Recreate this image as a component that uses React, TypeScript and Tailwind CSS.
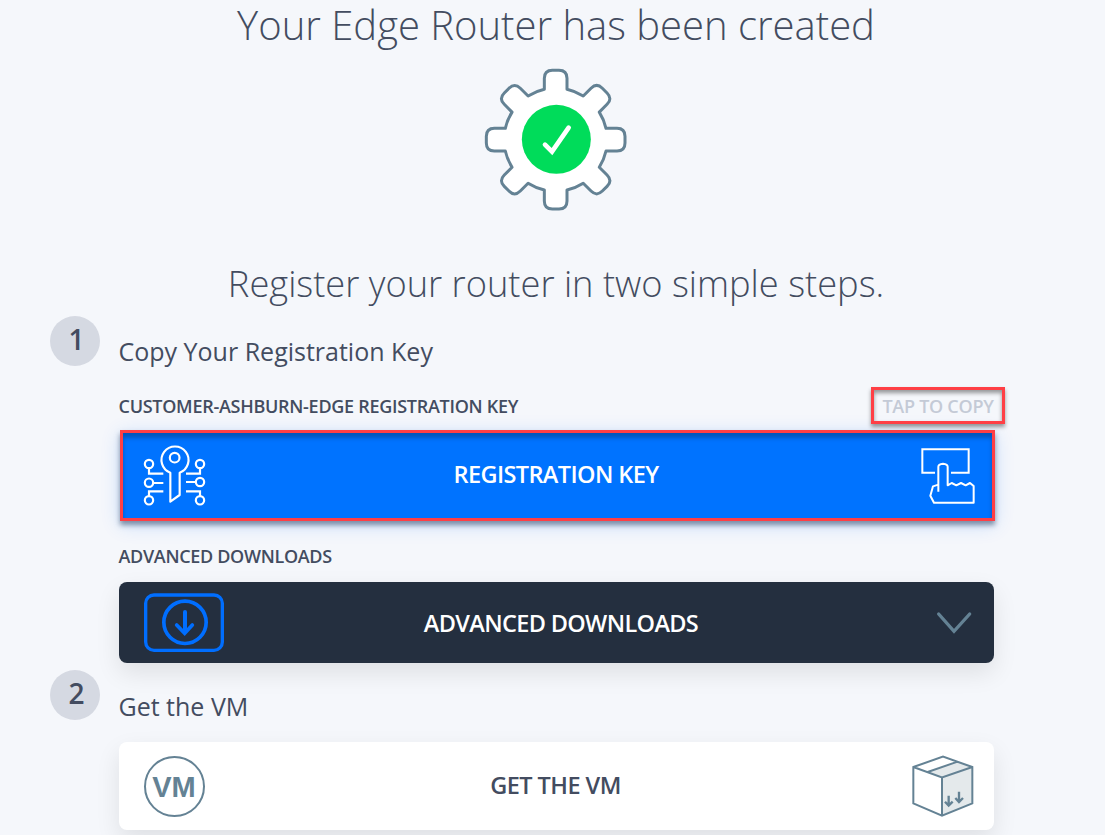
const TEETH = 8;

function gearPath(): string {
  let d = "";
  for (let i = 0; i < TEETH; i++) {
    const a = (i * 2 * Math.PI) / TEETH;
    const p = (x: number, y: number) =>
      `${(x * Math.cos(a) - y * Math.sin(a)).toFixed(2)} ${(x * Math.sin(a) + y * Math.cos(a)).toFixed(2)}`;
    d += i === 0 ? `M${p(-34, -151)}` : `A155 155 0 0 1 ${p(-34, -151)}`;
    d += `L${p(-34, -184)}Q${p(-34, -208)} ${p(-10, -208)}L${p(10, -208)}Q${p(34, -208)} ${p(34, -184)}L${p(34, -151)}`;
  }
  return d + "A155 155 0 0 1 -34 -151Z";
}

function Gear() {
  return (
    <svg className="block h-40 w-40" viewBox="-242 -239 480 480" fill="none">
      <path d={gearPath()} fill="#fff" stroke="#648294" strokeWidth="9" strokeLinejoin="round" />
      <circle cx="2" cy="-1" r="103.5" fill="#00dc5a" />
      <path d="M-32 15L-11 36L39 -36" stroke="#fff" strokeWidth="14" strokeLinecap="round" strokeLinejoin="miter" />
    </svg>
  );
}

function KeyIcon() {
  return (
    <svg className="h-[62px] w-16" viewBox="96 60 192 186" fill="none" stroke="#fff" strokeWidth="6.5">
      <path d="M181 143A40.5 40.5 0 1 1 209 143V210L181 230Z" strokeLinejoin="round" />
      <circle cx="194" cy="98" r="14.5" />
      <circle cx="117" cy="117" r="12.5" />
      <circle cx="117" cy="173" r="12.5" />
      <circle cx="117" cy="226" r="12.5" />
      <circle cx="270" cy="117" r="12.5" />
      <circle cx="270" cy="171" r="12.5" />
      <circle cx="270" cy="226" r="12.5" />
      <path d="M117 129V146H160M129 174H160M117 215V199H160M270 129V146H228M258 171H228M270 215V199H228" />
    </svg>
  );
}

function TapIcon() {
  return (
    <svg className="h-[58px] w-14" viewBox="180 201 168 174" fill="none" stroke="#fff" strokeWidth="6">
      <path d="M225 278H187V208H326V278H273" />
      <path d="M235 335V260Q235 252 249 251Q263 252 263 260V316L275 309L289 316L303 309L317 316L330 309L341 318V368H222L211 347L219 319L235 314" strokeLinejoin="round" />
    </svg>
  );
}

function DownloadIcon() {
  return (
    <svg className="h-[60px] w-[82px]" viewBox="99 53 246 180" fill="none" stroke="#006eff">
      <rect x="107" y="59" width="230" height="166" rx="25" strokeWidth="10" />
      <circle cx="225" cy="141" r="63.5" strokeWidth="11" />
      <path d="M225 110V168" strokeWidth="12" strokeLinecap="round" />
      <path d="M200 149L224 174L247 149" strokeWidth="11" strokeLinecap="round" />
    </svg>
  );
}

function BoxIcon() {
  return (
    <svg className="h-[62px] w-16" viewBox="62 61 192 186" fill="none" stroke="#648294" strokeWidth="6">
      <path d="M112 112L202 81L246 97V206L155 243V128Z" fill="#e4e9eb" stroke="none" />
      <path d="M69 97L158 66L246 97V206L155 243L69 206ZM69 97L155 128L246 97M155 128V243M112 112L202 81" />
      <path d="M175 183V211M164 201L175 213L187 201M206 171V200M195 190L206 202L218 190" strokeWidth="7" />
    </svg>
  );
}

function StepNumber({ n }: { n: number }) {
  return (
    <div className="flex h-[50px] w-[50px] shrink-0 justify-center rounded-full bg-[#d5d9e2] pl-[3px] text-[28px] leading-[46px] font-semibold">
      {n}
    </div>
  );
}

export default function App() {
  return (
    <main className="h-[835px] w-[1105px] overflow-hidden bg-[#f5f7fb] font-['Open_Sans',sans-serif] text-[#434c60]">
      <h1 className="h-[60px] pl-[7px] text-center text-[40px] leading-[50px] font-light whitespace-nowrap">
        Your Edge Router has been created
      </h1>
      <div className="flex h-40 pl-[475px]"><Gear /></div>
      <h2 className="h-24 pt-[37px] pl-[7px] text-center text-[36.25px] leading-[52px] font-light whitespace-nowrap">
        Register your router in two simple steps.
      </h2>
      <section className="flex h-[354px] gap-[19px] pl-[50px]">
        <StepNumber n={1} />
        <div className="w-[886px]">
          <h3 className="-ml-[0.5px] h-[71px] pt-[17px] text-[25px] leading-9">Copy Your Registration Key</h3>
          <div className="flex h-[37px] items-center justify-between">
            <span className="-ml-[0.5px] pt-0.5 text-[18px] font-semibold tracking-[-0.28px]">CUSTOMER-ASHBURN-EDGE REGISTRATION KEY</span>
            <div className="flex h-[37px] w-[134px] items-center justify-center border-3 border-[#ff3f45] pt-px text-[18px] font-semibold tracking-[-0.27px] text-[#c4cad6] shadow-[0_3px_4px_#0006,inset_0_3px_4px_#0006]">
              TAP TO COPY
            </div>
          </div>
          <button className="mt-[6px] ml-px flex h-[91px] w-[875px] items-center border-3 border-[#ff3f45] bg-[#0073ff] pr-[16px] pl-[19px] text-white shadow-[0_4px_5px_#3c536f99,0_4px_18px_#006eff30,inset_0_5px_4px_#0056bd]">
            <KeyIcon />
            <span className="flex-1 pr-[14px] pb-px text-center text-[23.5px] font-semibold tracking-[-0.6px]">REGISTRATION KEY</span>
            <TapIcon />
          </button>
          <div className="-ml-[0.5px] h-[61px] pt-[21px] text-[18px] leading-7 font-semibold tracking-[-0.32px]">ADVANCED DOWNLOADS</div>
          <button className="flex h-[81px] w-[875px] items-center rounded-lg bg-[#242f3f] pr-[20px] pl-6 text-white shadow-[0_10px_25px_#00000018]">
            <DownloadIcon />
            <span className="flex-1 pt-[3px] pr-[37px] text-center text-[23.5px] font-semibold tracking-[-0.65px]">ADVANCED DOWNLOADS</span>
            <svg className="h-7 w-10" viewBox="102 101 120 84" fill="none">
              <path d="M116 116L162 168L209 116" stroke="#648294" strokeWidth="10" strokeLinecap="round" />
            </svg>
          </button>
        </div>
      </section>
      <section className="flex gap-[19px] pl-[50px]">
        <StepNumber n={2} />
        <div className="w-[875px]">
          <h3 className="-ml-[0.5px] h-[72px] pt-[18px] text-[25px] leading-9">Get the VM</h3>
          <button className="flex h-[88px] w-full items-center rounded-lg bg-white pr-[19px] pl-[25px] shadow-[0_10px_25px_#00000018]">
            <span className="flex h-[61px] w-[61px] items-center justify-center rounded-full border-2 border-[#648294] pt-[3px] pr-px font-['Liberation_Sans',sans-serif] text-[29px] font-bold text-[#648294]">VM</span>
            <span className="flex-1 pr-[5px] text-center text-[23.5px] font-semibold tracking-[-0.55px]">GET THE VM</span>
            <BoxIcon />
          </button>
        </div>
      </section>
    </main>
  );
}
